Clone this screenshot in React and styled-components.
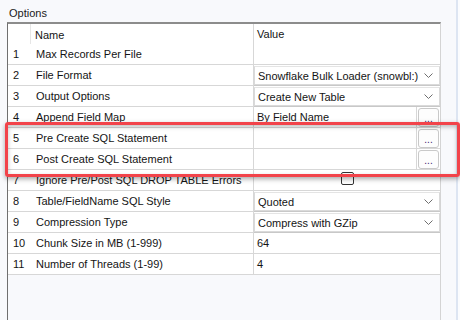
import React from "react";
import styled, { createGlobalStyle } from "styled-components";

const GlobalStyle = createGlobalStyle`
  html, body {
    margin: 0;
    padding: 0;
    background: #ffffff;
  }
  body {
    font-family: "Liberation Sans", Arial, sans-serif;
    font-size: 11px;
    color: #141414;
  }
`;

const rows = [
  { n: 1, name: "Max Records Per File", kind: "blank" },
  { n: 2, name: "File Format", kind: "combo", value: "Snowflake Bulk Loader (snowbl:)" },
  { n: 3, name: "Output Options", kind: "combo", value: "Create New Table" },
  { n: 4, name: "Append Field Map", kind: "button", value: "By Field Name" },
  { n: 5, name: "Pre Create SQL Statement", kind: "button", value: "" },
  { n: 6, name: "Post Create SQL Statement", kind: "button", value: "" },
  { n: 7, name: "Ignore Pre/Post SQL DROP TABLE Errors", kind: "check" },
  { n: 8, name: "Table/FieldName SQL Style", kind: "combo", value: "Quoted" },
  { n: 9, name: "Compression Type", kind: "combo", value: "Compress with GZip" },
  { n: 10, name: "Chunk Size in MB (1-999)", kind: "text", value: "64" },
  { n: 11, name: "Number of Threads (1-99)", kind: "text", value: "4" },
];

const Chevron = () => (
  <svg width="9" height="5" viewBox="0 0 9 5">
    <polyline points="0.5,0.5 4.5,4.5 8.5,0.5" fill="none" stroke="#6e6e6e" strokeWidth="1" />
  </svg>
);

const renderValue = (r) => {
  if (r.kind === "combo")
    return (
      <Combo>
        <span>{r.value}</span>
        <Chevron />
      </Combo>
    );
  if (r.kind === "button")
    return (
      <Split>
        <SplitText>{r.value}</SplitText>
        <Ellipsis>...</Ellipsis>
      </Split>
    );
  if (r.kind === "check")
    return (
      <CheckWrap>
        <Check />
      </CheckWrap>
    );
  return <ValueText>{r.value}</ValueText>;
};

const App = () => (
  <Window>
    <GlobalStyle />
    <Pane>
      <Label>Options</Label>
      <Grid>
        <HeaderRow>
          <HeadNum />
          <HeadCell>Name</HeadCell>
          <ValueCell>
            <ValueText>Value</ValueText>
          </ValueCell>
        </HeaderRow>
        {rows.map((r) => (
          <Row key={r.n}>
            <NumCell>{r.n}</NumCell>
            <NameCell>{r.name}</NameCell>
            <ValueCell>{r.kind === "blank" ? null : renderValue(r)}</ValueCell>
          </Row>
        ))}
      </Grid>
    </Pane>
    <Highlight />
  </Window>
);

export default App;

// STYLES

const Window = styled.div`
  position: relative;
  width: 460px;
  height: 320px;
  overflow: hidden;
  background: #fbfcfe;
`;

const Pane = styled.div`
  width: 456px;
  height: 320px;
  background: #f8f9fc;
  border-right: 2px solid #dde5f2;
  display: flex;
  flex-direction: column;
`;

const Label = styled.div`
  height: 22px;
  line-height: 26px;
  padding-left: 9px;
  color: #1a1a1a;
`;

const Grid = styled.div`
  margin-left: 7px;
  width: 432px;
  flex: 1;
  border-top: 2px solid #8c8c8c;
  border-left: 1px solid #6f6f6f;
  border-right: 1px solid #d4d4d4;
  background: #f8f9fc;
`;

const HeaderRow = styled.div`
  display: grid;
  grid-template-columns: 23px 222px 187px;
  height: 20px;
  background: #ffffff;
`;

const HeadNum = styled.div`
  border-right: 1px solid #e6e6e6;
`;

const HeadCell = styled.div`
  display: flex;
  align-items: center;
  padding-left: 4px;
  padding-top: 2px;
`;

const Row = styled.div`
  display: grid;
  grid-template-columns: 23px 222px 187px;
  height: 20px;
  background: #ffffff;
  border-bottom: 1px solid #d7d7d7;
`;

const NumCell = styled.div`
  display: flex;
  align-items: center;
  padding-left: 5px;
`;

const NameCell = styled.div`
  display: flex;
  align-items: center;
  padding-left: 5px;
  white-space: nowrap;
  overflow: hidden;
`;

const ValueCell = styled.div`
  border-left: 1px solid #d7d7d7;
  display: flex;
  align-items: stretch;
  min-width: 0;
`;

const ValueText = styled.div`
  display: flex;
  align-items: center;
  padding-left: 3px;
`;

const Combo = styled.div`
  flex: 1;
  display: flex;
  align-items: center;
  justify-content: space-between;
  padding: 0 6px 0 3px;
  margin-top: 1px;
  background: #ffffff;
  border: 1px solid #dadada;
  border-top-color: #e4e4e4;
  box-shadow: 0 1px 0 #c8c8c8;
  white-space: nowrap;
`;

const Split = styled.div`
  flex: 1;
  display: flex;
  align-items: stretch;
`;

const SplitText = styled.div`
  flex: 1;
  display: flex;
  align-items: center;
  padding-left: 3px;
  border-right: 1px solid #d7d7d7;
`;

const Ellipsis = styled.div`
  width: 21px;
  margin: 1px 1px 0 1px;
  border: 1px solid #c9c9c9;
  border-radius: 3px;
  background: #fdfdfd;
  display: flex;
  align-items: flex-end;
  justify-content: center;
  padding-bottom: 2px;
  box-sizing: border-box;
  color: #3c1f6e;
  font-size: 10px;
  line-height: 10px;
`;

const CheckWrap = styled.div`
  flex: 1;
  display: flex;
  justify-content: center;
  padding-top: 2px;
`;

const Check = styled.div`
  width: 13px;
  height: 13px;
  box-sizing: border-box;
  border: 1px solid #333333;
  border-radius: 2px;
  background: #ffffff;
`;

const Highlight = styled.div`
  position: absolute;
  left: 5px;
  top: 122px;
  width: 455px;
  height: 55px;
  box-sizing: border-box;
  border: 3px solid #f2434a;
  border-radius: 3px;
  box-shadow: 0 2px 5px rgba(0, 0, 0, 0.35), inset 0 2px 4px rgba(0, 0, 0, 0.25);
`;
